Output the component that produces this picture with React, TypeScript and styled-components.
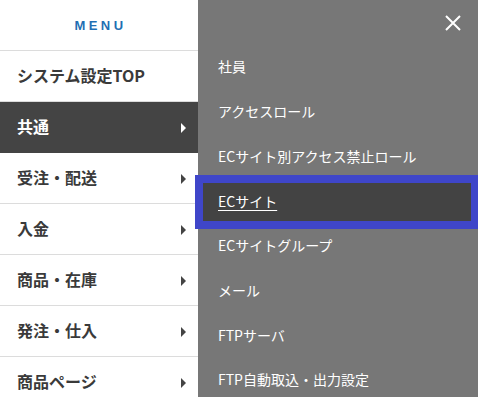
import { createGlobalStyle, styled } from "styled-components";

const GlobalStyle = createGlobalStyle`
  html, body {
    margin: 0;
    padding: 0;
  }
  body {
    font-family: "Noto Sans CJK JP", "Noto Sans", sans-serif;
  }
`;

const categories = [
  { label: "システム設定TOP", arrow: false },
  { label: "共通", arrow: true, active: true },
  { label: "受注・配送", arrow: true },
  { label: "入金", arrow: true },
  { label: "商品・在庫", arrow: true },
  { label: "発注・仕入", arrow: true },
  { label: "商品ページ", arrow: true },
];

const subItems = [
  "社員",
  "アクセスロール",
  "ECサイト別アクセス禁止ロール",
  "ECサイト",
  "ECサイトグループ",
  "メール",
  "FTPサーバ",
  "FTP自動取込・出力設定",
];

export default function App() {
  return (
    <>
      <GlobalStyle />
      <Screen>
        <MainMenu>
          <MenuHeader>MENU</MenuHeader>
          {categories.map(c => (
            <CategoryRow key={c.label} $active={c.active}>
              <span>{c.label}</span>
              {c.arrow && <Arrow $active={c.active} />}
            </CategoryRow>
          ))}
        </MainMenu>
        <SubMenu>
          <SubHeader>
            <CloseButton aria-label="close">
              <svg width="16" height="16" viewBox="0 0 16 16">
                <path
                  d="M1 1 L15 15 M15 1 L1 15"
                  stroke="#fff"
                  strokeWidth="2"
                  fill="none"
                />
              </svg>
            </CloseButton>
          </SubHeader>
          {subItems.map(item => (
            <SubRow key={item}>
              <SubLink $focused={item === "ECサイト"}>{item}</SubLink>
            </SubRow>
          ))}
        </SubMenu>
      </Screen>
    </>
  );
}

const Screen = styled.div`
  display: flex;
  width: 478px;
  height: 397px;
  overflow: hidden;
`;

const MainMenu = styled.nav`
  width: 198px;
  flex: none;
  background: #fff;
`;

const MenuHeader = styled.div`
  height: 50px;
  border-bottom: 1px solid #dcdcdc;
  display: flex;
  align-items: center;
  justify-content: center;
  padding-left: 3px;
  box-sizing: content-box;
  color: #1f6fb3;
  font-family: "Liberation Sans", Arial, sans-serif;
  font-weight: 700;
  font-size: 13px;
  letter-spacing: 3.4px;
`;

const CategoryRow = styled.div<{ $active?: boolean }>`
  height: 50px;
  border-bottom: 1px solid ${({ $active }) => ($active ? "#444" : "#dcdcdc")};
  display: flex;
  align-items: center;
  justify-content: space-between;
  padding: 0 12px 2px 17px;
  box-sizing: border-box;
  height: 51px;
  background: ${({ $active }) => ($active ? "#444" : "#fff")};
  color: ${({ $active }) => ($active ? "#fff" : "#3a3a3a")};
  font-size: 16px;
  font-weight: 700;
  line-height: 1;
`;

const Arrow = styled.i<{ $active?: boolean }>`
  display: block;
  width: 0;
  height: 0;
  margin-top: 4px;
  border-left: 5px solid ${({ $active }) => ($active ? "#fff" : "#444")};
  border-top: 5px solid transparent;
  border-bottom: 5px solid transparent;
`;

const SubMenu = styled.div`
  flex: 1;
  background: #777;
`;

const SubHeader = styled.div`
  height: 45.6px;
  display: flex;
  justify-content: flex-end;
  padding: 15px 17px 0 0;
  box-sizing: border-box;
`;

const CloseButton = styled.button`
  width: 16px;
  height: 16px;
  padding: 0;
  border: 0;
  background: none;
  display: flex;
`;

const SubRow = styled.div`
  height: 44.7px;
  display: flex;
  align-items: center;
  padding: 0 7px 0 5px;
`;

const SubLink = styled.a<{ $focused?: boolean }>`
  flex: 1;
  height: 38px;
  box-sizing: border-box;
  display: flex;
  align-items: center;
  padding: 0 0 3px 15px;
  color: #fff;
  font-size: 14px;
  line-height: 1;
  background: ${({ $focused }) => ($focused ? "#434343" : "transparent")};
  outline: ${({ $focused }) => ($focused ? "8px solid #3f46c9" : "none")};
  text-decoration: ${({ $focused }) => ($focused ? "underline" : "none")};
  text-underline-offset: 3px;
`;
